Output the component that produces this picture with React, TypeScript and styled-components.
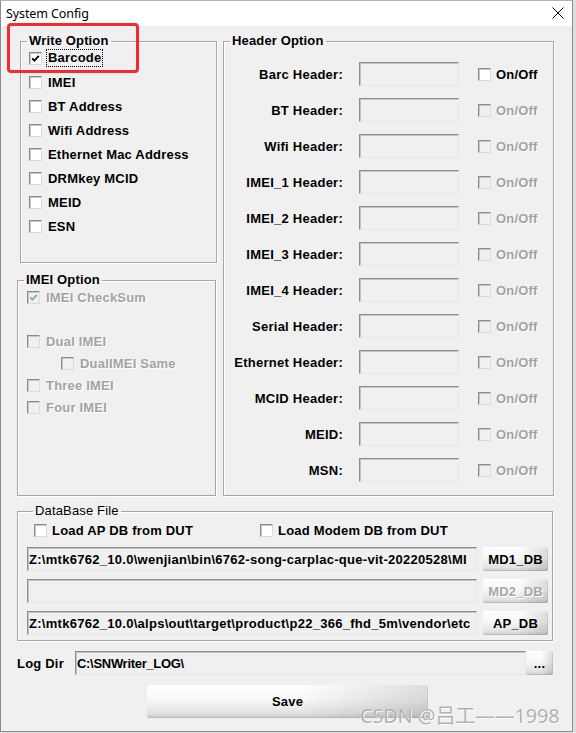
import React from 'react';
import styled, { createGlobalStyle, css } from 'styled-components';

const GlobalStyle = createGlobalStyle`
  html, body {
    margin: 0;
    padding: 0;
    background: #dedede;
  }
  body {
    width: 576px;
    height: 733px;
    overflow: hidden;
    font-family: "Liberation Sans", Arial, sans-serif;
    font-size: 13px;
    color: #000;
  }
  * {
    box-sizing: border-box;
  }
`;

const writeOptions = [
  'Barcode',
  'IMEI',
  'BT Address',
  'Wifi Address',
  'Ethernet Mac Address',
  'DRMkey MCID',
  'MEID',
  'ESN',
];

const headers = [
  'Barc Header:',
  'BT Header:',
  'Wifi Header:',
  'IMEI_1 Header:',
  'IMEI_2 Header:',
  'IMEI_3 Header:',
  'IMEI_4 Header:',
  'Serial Header:',
  'Ethernet Header:',
  'MCID Header:',
  'MEID:',
  'MSN:',
];

// paths are shown as far as the field lets them be read
const dbRows = [
  {
    path: 'Z:\\mtk6762_10.0\\wenjian\\bin\\6762-song-carplac-que-vit-20220528\\MI',
    button: 'MD1_DB',
    disabled: false,
  },
  { path: '', button: 'MD2_DB', disabled: true },
  {
    path: 'Z:\\mtk6762_10.0\\alps\\out\\target\\product\\p22_366_fhd_5m\\vendor\\etc',
    button: 'AP_DB',
    disabled: false,
  },
];

const Check = ({ checked, disabled }: { checked?: boolean; disabled?: boolean }) => (
  <CheckBox $disabled={disabled}>
    {checked && (
      <svg width="9" height="9" viewBox="0 0 9 9">
        <path
          d="M1.2 4.3 L3.4 6.6 L7.8 1.8"
          fill="none"
          stroke={disabled ? '#a0a0a0' : '#000'}
          strokeWidth="1.8"
        />
      </svg>
    )}
  </CheckBox>
);

export default function App() {
  return (
    <>
      <GlobalStyle />
      <Window>
        <TitleBar>
          <Title>System Config</Title>
          <svg width="12" height="12" viewBox="0 0 12 12">
            <path d="M0.5 0.5 L11.5 11.5 M11.5 0.5 L0.5 11.5" stroke="#000" strokeWidth="1" />
          </svg>
        </TitleBar>

        <Body>
          <TopGrid>
            <LeftColumn>
              <WriteGroup>
                <Legend>Write Option</Legend>
                <CheckList $gap={4} $inset={8}>
                  {writeOptions.map((name, i) => (
                    <CheckRow key={name}>
                      <Check checked={i === 0} />
                      <CheckText $focused={i === 0}>{name}</CheckText>
                    </CheckRow>
                  ))}
                </CheckList>
              </WriteGroup>

              <ImeiGroup>
                <Legend>IMEI Option</Legend>
                <CheckList $gap={2} $inset={9}>
                  <CheckRow>
                    <Check checked disabled />
                    <CheckText $disabled>IMEI CheckSum</CheckText>
                  </CheckRow>
                  <CheckRow $spaced>
                    <Check disabled />
                    <CheckText $disabled>Dual IMEI</CheckText>
                  </CheckRow>
                  <CheckRow $indent={34}>
                    <Check disabled />
                    <CheckText $disabled>DualIMEI Same</CheckText>
                  </CheckRow>
                  <CheckRow>
                    <Check disabled />
                    <CheckText $disabled>Three IMEI</CheckText>
                  </CheckRow>
                  <CheckRow>
                    <Check disabled />
                    <CheckText $disabled>Four IMEI</CheckText>
                  </CheckRow>
                </CheckList>
              </ImeiGroup>
            </LeftColumn>

            <HeaderGroup>
              <Legend>Header Option</Legend>
              <HeaderList>
                {headers.map((label, i) => (
                  <HeaderRow key={label}>
                    <HeaderLabel>{label}</HeaderLabel>
                    <Field $width={100} />
                    <Toggle>
                      <Check disabled={i !== 0} />
                      <CheckText $disabled={i !== 0}>On/Off</CheckText>
                    </Toggle>
                  </HeaderRow>
                ))}
              </HeaderList>
            </HeaderGroup>
          </TopGrid>

          <DbGroup>
            <Legend $light>DataBase File</Legend>
            <DbChecks>
              <DbCheck>
                <Check />
                <CheckText>Load AP DB from DUT</CheckText>
              </DbCheck>
              <DbCheck>
                <Check />
                <CheckText>Load Modem DB from DUT</CheckText>
              </DbCheck>
            </DbChecks>
            <DbRows>
              {dbRows.map((row) => (
                <PathRow key={row.button}>
                  <Field $width={450} $spacing={0.28}>
                    {row.path}
                  </Field>
                  <SkinButton $width={65} $disabled={row.disabled}>
                    {row.button}
                  </SkinButton>
                </PathRow>
              ))}
            </DbRows>
          </DbGroup>

          <LogRow>
            <LogLabel>Log Dir</LogLabel>
            <Field $width={451} $spacing={-0.3}>
              C:\SNWriter_LOG\
            </Field>
            <SkinButton $width={27}>...</SkinButton>
          </LogRow>

          <SaveRow>
            <SaveButton>Save</SaveButton>
          </SaveRow>
        </Body>

        <Highlight />
        <Watermark>CSDN @吕工——1998</Watermark>
      </Window>
    </>
  );
}

const Window = styled.div`
  position: relative;
  width: 573px;
  height: 732px;
  display: flex;
  flex-direction: column;
  background: #f0f0f0;
  border: 1px solid #8c8c8c;
  border-top-color: #b4b4b4;
  overflow: hidden;
`;

const TitleBar = styled.div`
  height: 25px;
  flex-shrink: 0;
  display: flex;
  align-items: center;
  justify-content: space-between;
  padding: 0 8px 1px 5px;
  background: #fff;
`;

const Title = styled.span`
  font-family: "Noto Sans", "Liberation Sans", sans-serif;
  font-size: 12.5px;
  letter-spacing: -0.1px;
`;

const Body = styled.div`
  display: flex;
  flex-direction: column;
  padding: 8px 0 0 16px;
`;

const TopGrid = styled.div`
  display: grid;
  grid-template-columns: 200px 331px;
  column-gap: 6px;
`;

const LeftColumn = styled.div`
  display: flex;
  flex-direction: column;
`;

const groupBox = css`
  margin: 0;
  min-width: 0;
  border: 1px solid #a6a6a6;
  box-shadow: inset 1px 1px 0 #fff, 1px 1px 0 #fff;
`;

const Legend = styled.legend<{ $light?: boolean }>`
  margin-left: 6px;
  padding: 0 2px;
  font-size: 13px;
  line-height: 14px;
  letter-spacing: 0.15px;
  font-weight: ${({ $light }) => ($light ? 'normal' : 'bold')};
`;

const WriteGroup = styled.fieldset`
  ${groupBox};
  margin-left: 3px;
  padding: 0 0 26px 0;
`;

const ImeiGroup = styled.fieldset`
  ${groupBox};
  flex: 1;
  margin: 10px 1px 0 0;
  padding: 0;
`;

const HeaderGroup = styled.fieldset`
  ${groupBox};
  padding: 14px 0 13px 0;
`;

const CheckList = styled.div<{ $gap: number; $inset: number }>`
  display: flex;
  flex-direction: column;
  gap: ${({ $gap }) => $gap}px;
  padding-left: ${({ $inset }) => $inset}px;
`;

const CheckRow = styled.label<{ $spaced?: boolean; $indent?: number }>`
  height: 20px;
  display: flex;
  align-items: center;
  gap: 6px;
  margin-top: ${({ $spaced }) => ($spaced ? 22 : 0)}px;
  margin-left: ${({ $indent }) => $indent || 0}px;
`;

const CheckBox = styled.span<{ $disabled?: boolean }>`
  width: 13px;
  height: 13px;
  flex-shrink: 0;
  display: inline-flex;
  align-items: center;
  justify-content: center;
  border: 1px solid;
  border-color: #8a8a8a #dcdcdc #dcdcdc #8a8a8a;
  box-shadow: inset 1px 1px 0 #c8c8c8;
  background: ${({ $disabled }) => ($disabled ? '#f0f0f0' : '#fff')};
`;

const CheckText = styled.span<{ $disabled?: boolean; $focused?: boolean }>`
  font-weight: bold;
  font-size: 13px;
  line-height: 15px;
  letter-spacing: 0.2px;
  white-space: nowrap;
  color: ${({ $disabled }) => ($disabled ? '#a3a3a3' : '#000')};
  text-shadow: ${({ $disabled }) => ($disabled ? '1px 1px 0 #fff' : 'none')};
  ${({ $focused }) =>
    $focused &&
    css`
      margin-left: -1px;
      padding: 0 1px;
      outline: 1px dotted #000;
      outline-offset: 0;
      line-height: 16px;
    `}
`;

const HeaderList = styled.div`
  display: flex;
  flex-direction: column;
  gap: 12px;
`;

const HeaderRow = styled.div`
  height: 24px;
  display: flex;
  align-items: center;
`;

const HeaderLabel = styled.span`
  width: 119px;
  margin-right: 16px;
  text-align: right;
  font-weight: bold;
  letter-spacing: 0.25px;
  white-space: nowrap;
`;

const Field = styled.div<{ $width: number; $spacing?: number }>`
  width: ${({ $width }) => $width}px;
  height: 24px;
  flex-shrink: 0;
  padding: 0 1px;
  display: flex;
  align-items: center;
  overflow: hidden;
  white-space: nowrap;
  background: #f0f0f0;
  border: 1px solid;
  border-color: #8e8e8e #e6e6e6 #e6e6e6 #8e8e8e;
  box-shadow: inset 1px 1px 0 #c4c4c4;
  font-size: 13px;
  font-weight: bold;
  letter-spacing: ${({ $spacing }) => $spacing ?? 0}px;
`;

const Toggle = styled.label`
  margin-left: 19px;
  display: flex;
  align-items: center;
  gap: 5px;
`;

const DbGroup = styled.fieldset`
  ${groupBox};
  width: 536px;
  margin-top: 8px;
  padding: 2px 0 5px 9px;
`;

const DbChecks = styled.div`
  height: 20px;
  display: flex;
  align-items: center;
  margin-left: 7px;
`;

const DbCheck = styled.label`
  width: 226px;
  display: flex;
  align-items: center;
  gap: 5px;
`;

const DbRows = styled.div`
  margin-top: 7px;
  display: flex;
  flex-direction: column;
  gap: 8px;
`;

const PathRow = styled.div`
  display: flex;
  gap: 6px;
`;

const skin = css`
  border: none;
  border-radius: 2px;
  background: linear-gradient(to right, rgba(0, 0, 0, 0) 55%, rgba(0, 0, 0, 0.13)),
    linear-gradient(to bottom, #ffffff 0%, #f7f7f7 45%, #e2e2e2 85%, #c9c9c9 100%);
  box-shadow: inset -1px -1px 0 rgba(0, 0, 0, 0.08);
  font-family: "Liberation Sans", Arial, sans-serif;
  font-weight: bold;
  font-size: 13px;
  letter-spacing: 0.2px;
  padding: 0;
`;

const SkinButton = styled.button<{ $width: number; $disabled?: boolean }>`
  ${skin};
  width: ${({ $width }) => $width}px;
  height: 24px;
  flex-shrink: 0;
  color: ${({ $disabled }) => ($disabled ? '#a8a8a8' : '#000')};
  text-shadow: ${({ $disabled }) => ($disabled ? '1px 1px 0 #fff' : 'none')};
`;

const LogRow = styled.div`
  margin-top: 10px;
  height: 24px;
  display: flex;
  align-items: center;
`;

const LogLabel = styled.span`
  width: 58px;
  font-weight: bold;
  letter-spacing: 0.2px;
`;

const SaveRow = styled.div`
  margin-top: 10px;
  padding-left: 130px;
`;

const SaveButton = styled.button`
  ${skin};
  width: 281px;
  height: 33px;
  color: #000;
`;

const Highlight = styled.div`
  position: absolute;
  left: 6px;
  top: 22px;
  width: 132px;
  height: 50px;
  border: 3px solid #f52a2a;
  border-radius: 4px;
  pointer-events: none;
`;

const Watermark = styled.div`
  position: absolute;
  left: 359px;
  bottom: 2px;
  font-family: "Noto Sans", "Noto Sans CJK SC", sans-serif;
  font-size: 20px;
  letter-spacing: -0.2px;
  color: rgba(150, 150, 150, 0.75);
  text-shadow: 0 0 1px #fff, 1px 1px 0 rgba(255, 255, 255, 0.8);
  white-space: nowrap;
  pointer-events: none;
`;
